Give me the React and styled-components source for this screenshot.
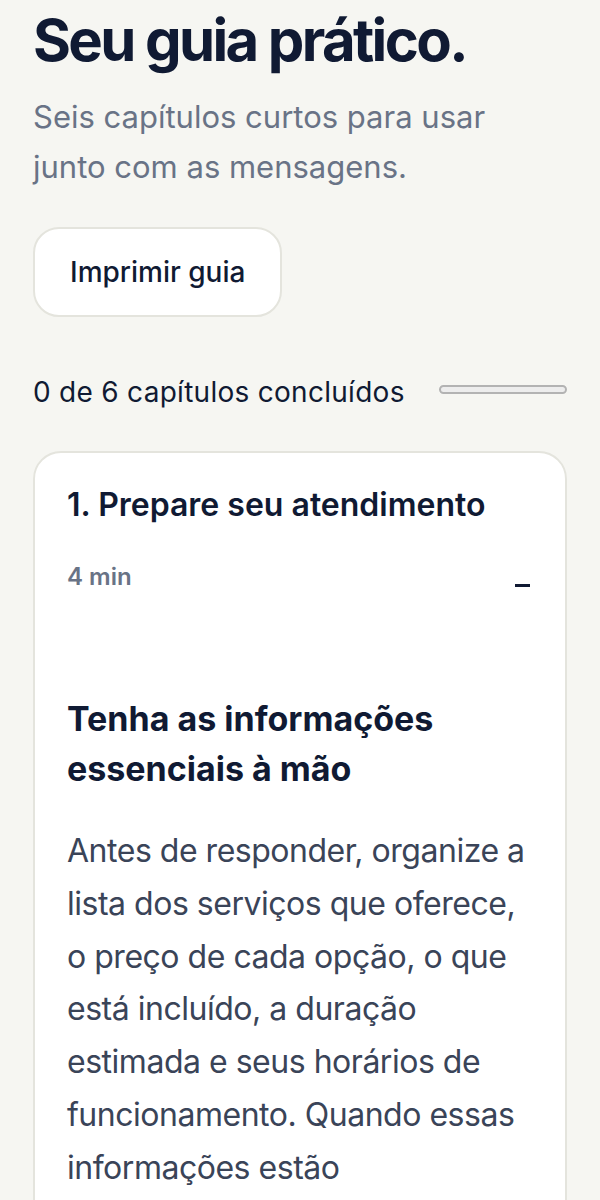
import React from "react";
import styled, { createGlobalStyle } from "styled-components";

const Global = createGlobalStyle`
  html, body { margin: 0; padding: 0; background: #f6f6f2; }
  body { font-family: Inter, "Noto Sans", sans-serif; color: #0f1a33; }
  * { box-sizing: border-box; }
`;

const Page = styled.main`
  padding: 8px 33px 0 33px;
  display: flex;
  flex-direction: column;
`;

const Title = styled.h1`
  margin: 0;
  font-size: 58px;
  font-weight: 700;
  letter-spacing: -0.045em;
  line-height: 64px;
  color: #101a33;
`;

const Lead = styled.p`
  margin: 20px 0 0 0;
  max-width: 480px;
  font-size: 31px;
  font-weight: 400;
  line-height: 50px;
  letter-spacing: 0;
  color: #697386;
`;

const PrintButton = styled.button`
  align-self: flex-start;
  margin-top: 35px;
  height: 90px;
  padding: 0 35px 0 35px;
  background: #ffffff;
  border: 2px solid #e4e4dd;
  border-radius: 26px;
  font-family: inherit;
  font-size: 28px;
  font-weight: 500;
  letter-spacing: 0;
  color: #101a33;
`;

const ProgressRow = styled.div`
  margin-top: 57px;
  display: flex;
  align-items: center;
  gap: 34px;
`;

const ProgressLabel = styled.span`
  font-size: 28px;
  line-height: 36px;
  letter-spacing: 0.01em;
  color: #101a33;
  white-space: nowrap;
`;

const Track = styled.div`
  flex: 1;
  height: 9px;
  margin-bottom: 5px;
  border: 2px solid #b3b3b3;
  background: #ededed;
  border-radius: 999px;
  overflow: hidden;
`;

const Fill = styled.div`
  height: 100%;
  background: #101a33;
`;

const Card = styled.section`
  margin-top: 41px;
  background: #ffffff;
  border: 2px solid #e4e4dd;
  border-radius: 28px;
  padding: 30px 30px 40px 32px;
`;

const CardHeader = styled.div`
  display: flex;
  flex-direction: column;
  gap: 35px;
`;

const ChapterTitle = styled.h2`
  margin: 0;
  font-size: 32px;
  font-weight: 600;
  letter-spacing: 0;
  line-height: 44px;
  color: #101a33;
`;

const MetaRow = styled.div`
  display: flex;
  justify-content: space-between;
  align-items: flex-end;
`;

const Duration = styled.span`
  font-size: 24px;
  line-height: 30px;
  font-weight: 600;
  letter-spacing: 0;
  color: #697386;
`;

const Toggle = styled.span`
  width: 15px;
  height: 3px;
  margin-right: 5px;
  margin-bottom: 5px;
  background: #101a33;
`;

const Body = styled.div`
  margin-top: 102px;
`;

const SectionTitle = styled.h3`
  margin: 0;
  font-size: 34px;
  font-weight: 700;
  letter-spacing: 0;
  line-height: 50px;
  color: #101a33;
`;

const Paragraph = styled.p`
  margin: 31px 0 0 0;
  font-size: 32px;
  line-height: 52.8px;
  letter-spacing: -0.015em;
  color: #3a4458;
`;

export default function App() {
  const done = 0;
  const total = 6;
  return (
    <>
      <Global />
      <Page>
        <Title>Seu guia prático.</Title>
        <Lead>Seis capítulos curtos para usar junto com as mensagens.</Lead>
        <PrintButton>Imprimir guia</PrintButton>
        <ProgressRow>
          <ProgressLabel>{done} de {total} capítulos concluídos</ProgressLabel>
          <Track>
            <Fill style={{ width: `${(done / total) * 100}%` }} />
          </Track>
        </ProgressRow>
        <Card>
          <CardHeader>
            <ChapterTitle>1. Prepare seu atendimento</ChapterTitle>
            <MetaRow>
              <Duration>4 min</Duration>
              <Toggle aria-label="Recolher" />
            </MetaRow>
          </CardHeader>
          <Body>
            <SectionTitle>Tenha as informações essenciais à mão</SectionTitle>
            <Paragraph>
              Antes de responder, organize a lista dos serviços que oferece, o
              preço de cada opção, o que está incluído, a duração estimada e
              seus horários de funcionamento. Quando essas informações estão
              sistematizadas, você responde mais rápido e transmite confiança.
            </Paragraph>
          </Body>
        </Card>
      </Page>
    </>
  );
}
